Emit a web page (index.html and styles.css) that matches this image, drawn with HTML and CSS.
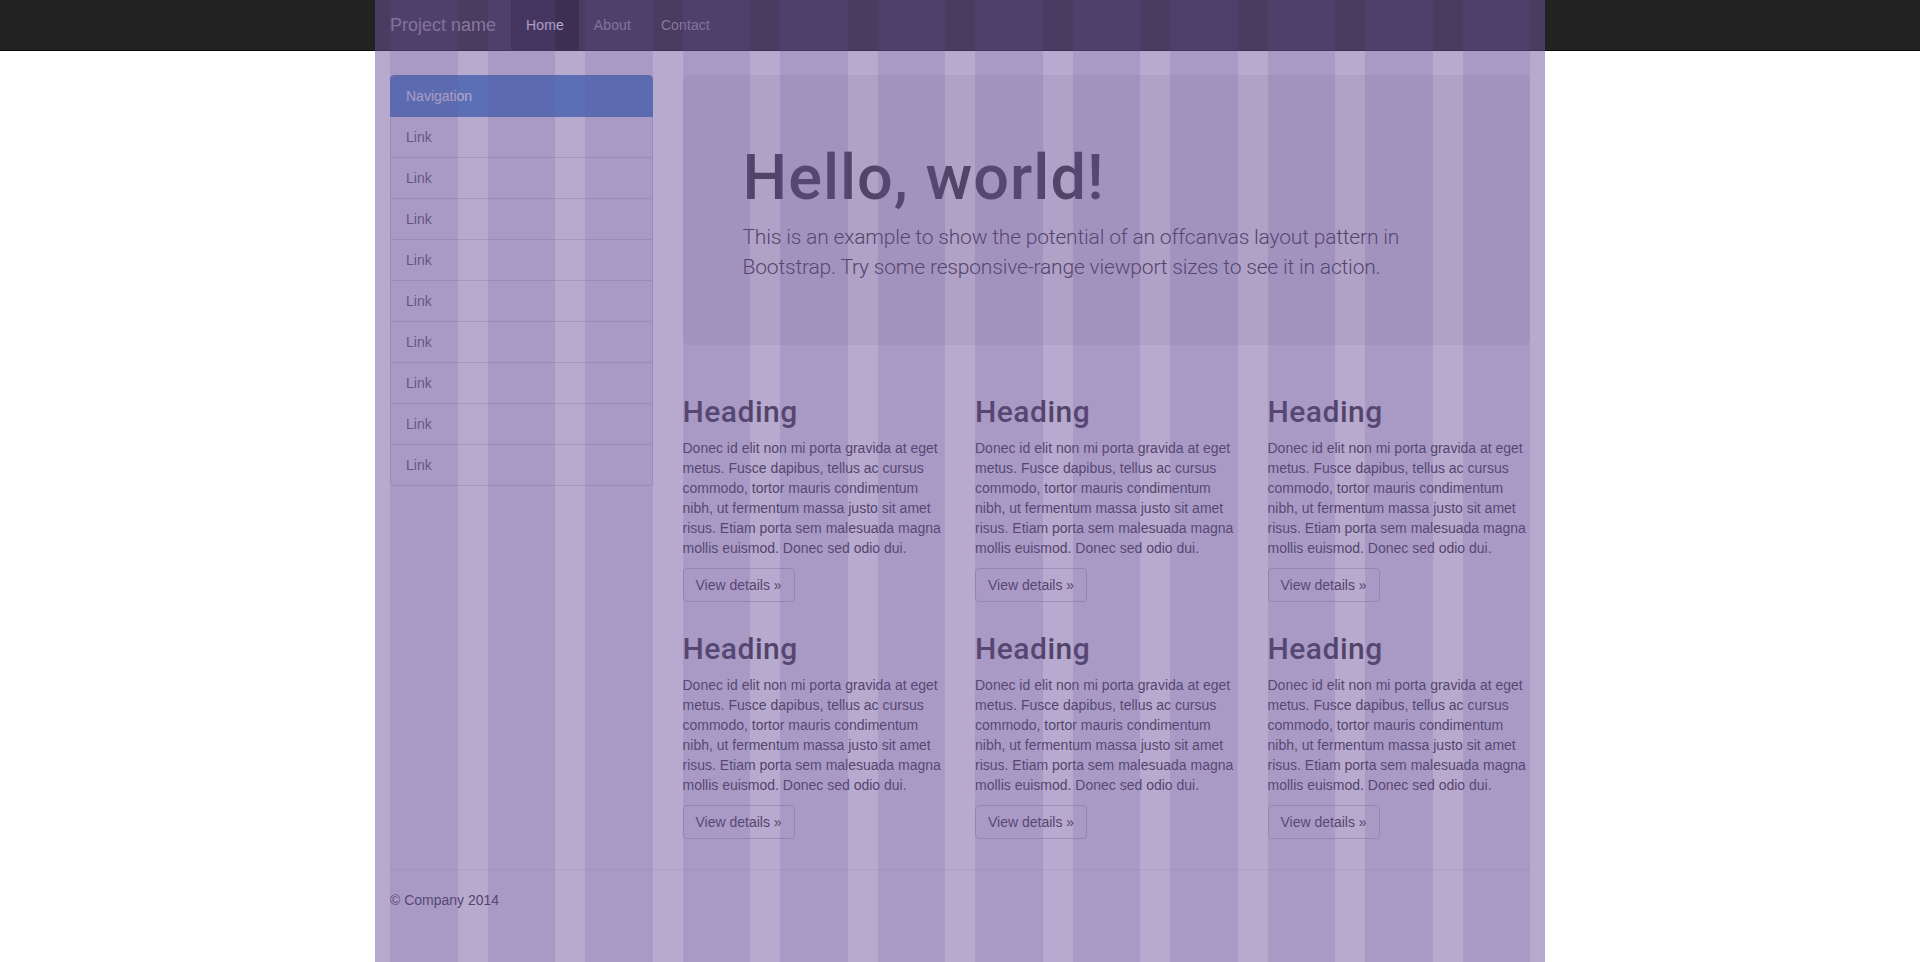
FILE: index.html
```html
<!DOCTYPE html>
<html lang="en">
<head>
<meta charset="utf-8">
<title>Off Canvas Template for Bootstrap</title>
<link rel="stylesheet" href="styles.css">
</head>
<body>
<nav class="navbar">
  <div class="container navbar-inner">
    <a class="navbar-brand" href="#">Project name</a>
    <ul class="navbar-nav">
      <li class="active"><a href="#">Home</a></li>
      <li><a href="#about">About</a></li>
      <li><a href="#contact">Contact</a></li>
    </ul>
  </div>
</nav>

<div class="container page">
  <div class="row">
    <aside class="sidebar">
      <div class="list-group">
        <a href="#" class="list-group-item active">Navigation</a>
        <a href="#" class="list-group-item">Link</a>
        <a href="#" class="list-group-item">Link</a>
        <a href="#" class="list-group-item">Link</a>
        <a href="#" class="list-group-item">Link</a>
        <a href="#" class="list-group-item">Link</a>
        <a href="#" class="list-group-item">Link</a>
        <a href="#" class="list-group-item">Link</a>
        <a href="#" class="list-group-item">Link</a>
        <a href="#" class="list-group-item">Link</a>
      </div>
    </aside>
    <main class="main">
      <div class="jumbotron">
        <h1>Hello, world!</h1>
        <p>This is an example to show the potential of an offcanvas layout pattern in Bootstrap. Try some responsive-range viewport sizes to see it in action.</p>
      </div>
      <div class="cards">
        <div class="card">
          <h2>Heading</h2>
          <p>Donec id elit non mi porta gravida at eget metus. Fusce dapibus, tellus ac cursus commodo, tortor mauris condimentum nibh, ut fermentum massa justo sit amet risus. Etiam porta sem malesuada magna mollis euismod. Donec sed odio dui.</p>
          <p><a class="btn" href="#">View details &raquo;</a></p>
        </div>
        <div class="card">
          <h2>Heading</h2>
          <p>Donec id elit non mi porta gravida at eget metus. Fusce dapibus, tellus ac cursus commodo, tortor mauris condimentum nibh, ut fermentum massa justo sit amet risus. Etiam porta sem malesuada magna mollis euismod. Donec sed odio dui.</p>
          <p><a class="btn" href="#">View details &raquo;</a></p>
        </div>
        <div class="card">
          <h2>Heading</h2>
          <p>Donec id elit non mi porta gravida at eget metus. Fusce dapibus, tellus ac cursus commodo, tortor mauris condimentum nibh, ut fermentum massa justo sit amet risus. Etiam porta sem malesuada magna mollis euismod. Donec sed odio dui.</p>
          <p><a class="btn" href="#">View details &raquo;</a></p>
        </div>
        <div class="card">
          <h2>Heading</h2>
          <p>Donec id elit non mi porta gravida at eget metus. Fusce dapibus, tellus ac cursus commodo, tortor mauris condimentum nibh, ut fermentum massa justo sit amet risus. Etiam porta sem malesuada magna mollis euismod. Donec sed odio dui.</p>
          <p><a class="btn" href="#">View details &raquo;</a></p>
        </div>
        <div class="card">
          <h2>Heading</h2>
          <p>Donec id elit non mi porta gravida at eget metus. Fusce dapibus, tellus ac cursus commodo, tortor mauris condimentum nibh, ut fermentum massa justo sit amet risus. Etiam porta sem malesuada magna mollis euismod. Donec sed odio dui.</p>
          <p><a class="btn" href="#">View details &raquo;</a></p>
        </div>
        <div class="card">
          <h2>Heading</h2>
          <p>Donec id elit non mi porta gravida at eget metus. Fusce dapibus, tellus ac cursus commodo, tortor mauris condimentum nibh, ut fermentum massa justo sit amet risus. Etiam porta sem malesuada magna mollis euismod. Donec sed odio dui.</p>
          <p><a class="btn" href="#">View details &raquo;</a></p>
        </div>
      </div>
    </main>
  </div>
  <hr class="divider">
  <footer class="footer">
    <p>&copy; Company 2014</p>
  </footer>
</div>

<div class="grid-overlay" aria-hidden="true">
  <div class="grid-cols">
    <span></span><span></span><span></span><span></span><span></span><span></span>
    <span></span><span></span><span></span><span></span><span></span><span></span>
  </div>
</div>
</body>
</html>
```

FILE: styles.css
```css
* { box-sizing: border-box; }

html, body {
  margin: 0;
  padding: 0;
}

body {
  font-family: "Liberation Sans", Arial, sans-serif;
  font-size: 14px;
  line-height: 20px;
  color: #333;
  background: #fff;
  min-height: 962px;
}

a { text-decoration: none; }

.container {
  width: 1170px;
  margin: 0 auto;
  padding: 0 15px;
}

/* navbar */
.navbar {
  background: #222;
  border-bottom: 1px solid #080808;
  height: 51px;
}

.navbar-inner {
  display: flex;
  align-items: stretch;
  height: 50px;
}

.navbar-brand {
  display: block;
  margin-left: -15px;
  padding: 15px;
  height: 50px;
  font-size: 18px;
  line-height: 20px;
  color: #9d9d9d;
}

.navbar-nav {
  display: flex;
  list-style: none;
  margin: 0;
  padding: 0;
}

.navbar-nav a {
  display: block;
  padding: 15px;
  line-height: 20px;
  font-size: 14px;
  color: #9d9d9d;
  letter-spacing: 0.1px;
}

.navbar-nav .active a {
  color: #fff;
  background: #080808;
}

/* page */
.page {
  padding-top: 24px;
}

.row {
  display: flex;
  margin: 0 -15px;
}

.sidebar {
  width: 292.5px;
  padding: 0 15px;
  flex: none;
}

.main {
  width: 877.5px;
  padding: 0 15px;
  flex: none;
}

/* list group */
.list-group {
  display: flex;
  flex-direction: column;
  margin-bottom: 20px;
}

.list-group-item {
  display: block;
  padding: 10px 15px;
  margin-bottom: -1px;
  background: #fff;
  border: 1px solid #ddd;
  color: #555;
  line-height: 20px;
}

.list-group-item:first-child {
  border-top-left-radius: 4px;
  border-top-right-radius: 4px;
}

.list-group-item:last-child {
  margin-bottom: 0;
  border-bottom-left-radius: 4px;
  border-bottom-right-radius: 4px;
}

.list-group-item.active {
  background: #428bca;
  border-color: #428bca;
  color: #fff;
  position: relative;
  z-index: 1;
}

/* jumbotron */
.jumbotron {
  background: #eee;
  border-radius: 6px;
  padding: 48px 60px;
  margin-bottom: 30px;
}

.jumbotron h1 {
  font-family: Roboto, "Liberation Sans", Arial, sans-serif;
  font-weight: 500;
  font-size: 63px;
  line-height: 69.3px;
  margin: 20px 0 10px;
  letter-spacing: 1px;
}

.jumbotron p {
  font-family: Roboto, "Liberation Sans", Arial, sans-serif;
  font-weight: 300;
  font-size: 21px;
  line-height: 30px;
  margin: 0 0 15px;
  letter-spacing: -0.18px;
}

/* cards */
.cards {
  display: grid;
  grid-template-columns: repeat(3, 1fr);
  column-gap: 30px;
}

.card h2 {
  font-family: Roboto, "Liberation Sans", Arial, sans-serif;
  font-weight: 500;
  font-size: 30px;
  line-height: 33px;
  margin: 20px 0 10px;
  letter-spacing: 0.5px;
}

.card p {
  margin: 0 0 10px;
}

.btn {
  display: inline-block;
  padding: 6px 12px;
  font-size: 14px;
  line-height: 20px;
  color: #333;
  background: #fff;
  border: 1px solid #ccc;
  border-radius: 4px;
}

/* footer */
.divider {
  margin: 20px 0;
  border: 0;
  border-top: 1px solid #eee;
}

.footer p {
  margin: 0 0 10px;
}

/* grid overlay */
.grid-overlay {
  position: fixed;
  top: 0;
  bottom: 0;
  left: 50%;
  width: 1170px;
  margin-left: -585px;
  background: rgba(114, 84, 160, 0.5);
  pointer-events: none;
  z-index: 100;
}

.grid-cols {
  display: grid;
  grid-template-columns: repeat(12, 1fr);
  column-gap: 30px;
  padding: 0 15px;
  height: 100%;
}

.grid-cols span {
  background: rgba(105, 88, 154, 0.19);
}
```
